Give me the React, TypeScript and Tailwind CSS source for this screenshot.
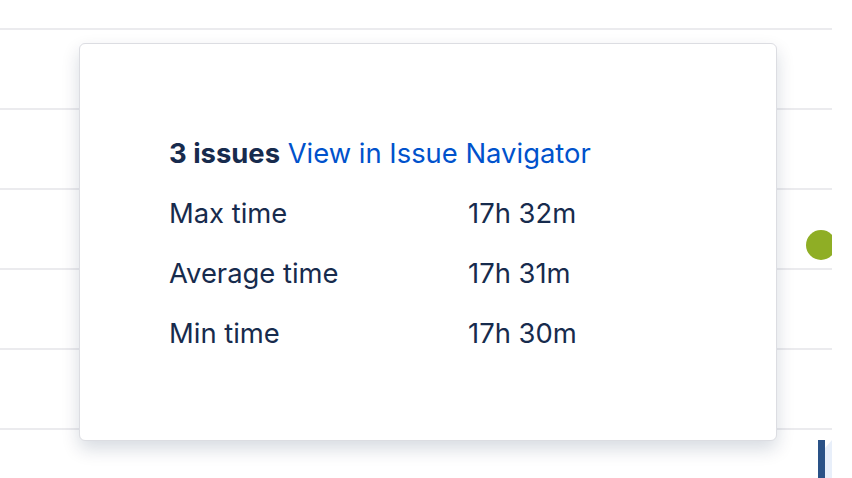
export default function App() {
  const rows = [
    { label: "Max time", value: "17h 32m" },
    { label: "Average time", value: "17h 31m" },
    { label: "Min time", value: "17h 30m" },
  ];

  return (
    <div className="relative h-[478px] w-[852px] overflow-hidden bg-white font-['Inter',sans-serif] text-[#172b4d]">
      {/* chart grid */}
      <div className="w-[832px] pt-[28px]">
        {[0, 1, 2, 3, 4, 5].map((i) => (
          <div key={i} className="h-[80px] border-t-2 border-[#ebebee]" />
        ))}
      </div>

      {/* data point */}
      <div className="absolute left-[806px] top-[230px] h-[30px] w-[30px] rounded-full bg-[#8fae25]" />
      <div className="absolute left-[832px] top-0 h-full w-[20px] bg-white" />

      {/* bar at bottom */}
      <div className="absolute left-[818px] top-[440px] flex h-[38px] w-[14px]">
        <div className="h-full w-[7px] bg-[#2a5287]" />
        <svg width="7" height="38" viewBox="0 0 7 38">
          <polygon points="0,8 7,0 7,38 0,38" fill="#e8effa" />
        </svg>
      </div>

      {/* popover */}
      <div className="absolute left-[79px] top-[43px] h-[398px] w-[698px] rounded-[6px] border border-[#dcdde2] bg-white pl-[89px] pr-[60px] pt-[89px] shadow-[0_8px_18px_rgba(9,30,66,0.16)]">
        <div className="flex flex-col gap-[20px] text-[27.4px] leading-[40px]">
          <div>
            <span className="font-bold">3 issues</span>{" "}
            <a className="text-[#0052cc]">View in Issue Navigator</a>
          </div>
          {rows.map((r) => (
            <div key={r.label} className="flex">
              <span className="w-[299px]">{r.label}</span>
              <span>{r.value}</span>
            </div>
          ))}
        </div>
      </div>
    </div>
  );
}
